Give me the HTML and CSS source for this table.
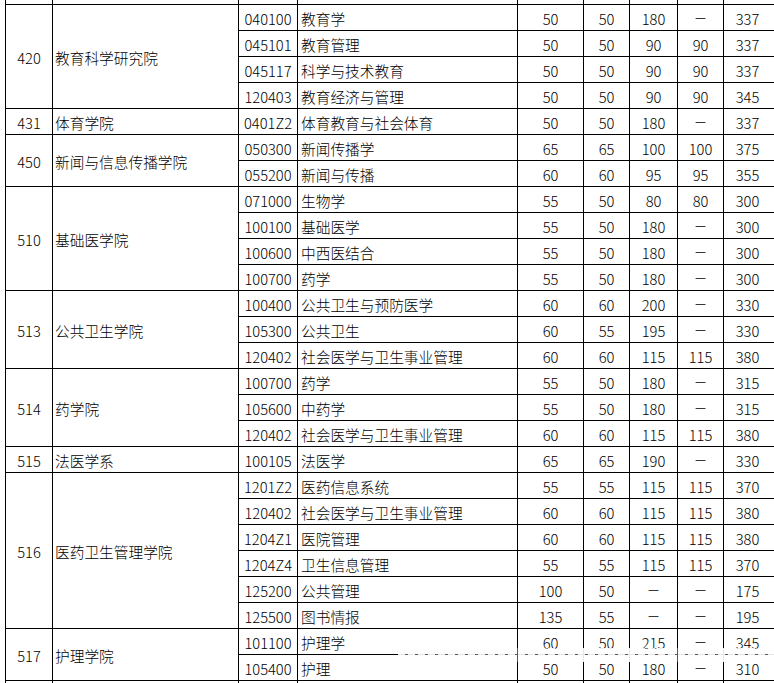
FILE: index.html
```html
<!DOCTYPE html>
<html lang="zh">
<head>
<meta charset="utf-8">
<title>录取分数线</title>
<link rel="stylesheet" href="styles.css">
</head>
<body>
<div class="sheet">
  <div class="grid">
    <div class="c stub"></div><div class="c stub"></div><div class="c stub"></div><div class="c stub"></div><div class="c stub"></div><div class="c stub"></div><div class="c stub"></div><div class="c stub"></div><div class="c stub last"></div>

    <div class="c span4">420</div><div class="c l span4">教育科学研究院</div>
    <div class="c">040100</div><div class="c m">教育学</div><div class="c">50</div><div class="c">50</div><div class="c">180</div><div class="c"><span class="dash">—</span></div><div class="c last">337</div>
    <div class="c">045101</div><div class="c m">教育管理</div><div class="c">50</div><div class="c">50</div><div class="c">90</div><div class="c">90</div><div class="c last">337</div>
    <div class="c">045117</div><div class="c m">科学与技术教育</div><div class="c">50</div><div class="c">50</div><div class="c">90</div><div class="c">90</div><div class="c last">337</div>
    <div class="c">120403</div><div class="c m">教育经济与管理</div><div class="c">50</div><div class="c">50</div><div class="c">90</div><div class="c">90</div><div class="c last">345</div>

    <div class="c">431</div><div class="c l">体育学院</div>
    <div class="c">0401Z2</div><div class="c m">体育教育与社会体育</div><div class="c">50</div><div class="c">50</div><div class="c">180</div><div class="c"><span class="dash">—</span></div><div class="c last">337</div>

    <div class="c span2">450</div><div class="c l span2">新闻与信息传播学院</div>
    <div class="c">050300</div><div class="c m">新闻传播学</div><div class="c">65</div><div class="c">65</div><div class="c">100</div><div class="c">100</div><div class="c last">375</div>
    <div class="c">055200</div><div class="c m">新闻与传播</div><div class="c">60</div><div class="c">60</div><div class="c">95</div><div class="c">95</div><div class="c last">355</div>

    <div class="c span4">510</div><div class="c l span4">基础医学院</div>
    <div class="c">071000</div><div class="c m">生物学</div><div class="c">55</div><div class="c">50</div><div class="c">80</div><div class="c">80</div><div class="c last">300</div>
    <div class="c">100100</div><div class="c m">基础医学</div><div class="c">55</div><div class="c">50</div><div class="c">180</div><div class="c"><span class="dash">—</span></div><div class="c last">300</div>
    <div class="c">100600</div><div class="c m">中西医结合</div><div class="c">55</div><div class="c">50</div><div class="c">180</div><div class="c"><span class="dash">—</span></div><div class="c last">300</div>
    <div class="c">100700</div><div class="c m">药学</div><div class="c">55</div><div class="c">50</div><div class="c">180</div><div class="c"><span class="dash">—</span></div><div class="c last">300</div>

    <div class="c span3">513</div><div class="c l span3">公共卫生学院</div>
    <div class="c">100400</div><div class="c m">公共卫生与预防医学</div><div class="c">60</div><div class="c">60</div><div class="c">200</div><div class="c"><span class="dash">—</span></div><div class="c last">330</div>
    <div class="c">105300</div><div class="c m">公共卫生</div><div class="c">60</div><div class="c">55</div><div class="c">195</div><div class="c"><span class="dash">—</span></div><div class="c last">330</div>
    <div class="c">120402</div><div class="c m">社会医学与卫生事业管理</div><div class="c">60</div><div class="c">60</div><div class="c">115</div><div class="c">115</div><div class="c last">380</div>

    <div class="c span3">514</div><div class="c l span3">药学院</div>
    <div class="c">100700</div><div class="c m">药学</div><div class="c">55</div><div class="c">50</div><div class="c">180</div><div class="c"><span class="dash">—</span></div><div class="c last">315</div>
    <div class="c">105600</div><div class="c m">中药学</div><div class="c">55</div><div class="c">50</div><div class="c">180</div><div class="c"><span class="dash">—</span></div><div class="c last">315</div>
    <div class="c">120402</div><div class="c m">社会医学与卫生事业管理</div><div class="c">60</div><div class="c">60</div><div class="c">115</div><div class="c">115</div><div class="c last">380</div>

    <div class="c">515</div><div class="c l">法医学系</div>
    <div class="c">100105</div><div class="c m">法医学</div><div class="c">65</div><div class="c">65</div><div class="c">190</div><div class="c"><span class="dash">—</span></div><div class="c last">330</div>

    <div class="c span6">516</div><div class="c l span6">医药卫生管理学院</div>
    <div class="c">1201Z2</div><div class="c m">医药信息系统</div><div class="c">55</div><div class="c">55</div><div class="c">115</div><div class="c">115</div><div class="c last">370</div>
    <div class="c">120402</div><div class="c m">社会医学与卫生事业管理</div><div class="c">60</div><div class="c">60</div><div class="c">115</div><div class="c">115</div><div class="c last">380</div>
    <div class="c">1204Z1</div><div class="c m">医院管理</div><div class="c">60</div><div class="c">60</div><div class="c">115</div><div class="c">115</div><div class="c last">380</div>
    <div class="c">1204Z4</div><div class="c m">卫生信息管理</div><div class="c">55</div><div class="c">55</div><div class="c">115</div><div class="c">115</div><div class="c last">370</div>
    <div class="c">125200</div><div class="c m">公共管理</div><div class="c">100</div><div class="c">50</div><div class="c"><span class="dash">—</span></div><div class="c"><span class="dash">—</span></div><div class="c last">175</div>
    <div class="c">125500</div><div class="c m">图书情报</div><div class="c">135</div><div class="c">55</div><div class="c"><span class="dash">—</span></div><div class="c"><span class="dash">—</span></div><div class="c last">195</div>

    <div class="c span2">517</div><div class="c l span2">护理学院</div>
    <div class="c">101100</div><div class="c m">护理学</div><div class="c">60</div><div class="c">50</div><div class="c">215</div><div class="c"><span class="dash">—</span></div><div class="c last">345</div>
    <div class="c">105400</div><div class="c m">护理</div><div class="c">50</div><div class="c">50</div><div class="c">180</div><div class="c"><span class="dash">—</span></div><div class="c last">310</div>

    <div class="c tail"></div><div class="c tail"></div><div class="c tail"></div><div class="c tail"></div><div class="c tail"></div><div class="c tail"></div><div class="c tail"></div><div class="c tail"></div><div class="c tail last"></div>
  </div>
  <div class="watermark"></div>
</div>
</body>
</html>
```

FILE: styles.css
```css
html, body {
  margin: 0;
  padding: 0;
  background: #fff;
  overflow: hidden;
}

.sheet {
  position: relative;
  width: 774px;
  height: 683px;
  overflow: hidden;
}

.grid {
  display: grid;
  grid-template-columns: 47px 186px 59px 220px 66px 46px 48px 46px 70px;
  grid-template-rows: 5px repeat(27, 26px);
  margin-left: 5px;
  border-left: 1px solid #000;
  width: max-content;
  font-family: "Noto Sans CJK SC", "Noto Sans", sans-serif;
  font-size: 14.7px;
  font-weight: 300;
  color: #000;
}

.c {
  box-sizing: border-box;
  border-right: 1px solid #000;
  border-bottom: 1px solid #000;
  display: flex;
  align-items: center;
  justify-content: center;
  padding-top: 3px;
  line-height: 20px;
  white-space: nowrap;
}

.c.l {
  justify-content: flex-start;
  padding-left: 2px;
}

.c.m {
  justify-content: flex-start;
  padding-left: 3px;
}

.c.last {
  padding-right: 22px;
}

.c.stub {
  padding: 0;
}

.c.tail {
  border-bottom: none;
}

.span2 { grid-row: span 2; }
.span3 { grid-row: span 3; }
.span4 { grid-row: span 4; }
.span6 { grid-row: span 6; }

.dash {
  font-family: "DejaVu Sans", sans-serif;
  font-size: 11px;
  font-weight: 400;
  position: relative;
  top: -1px;
}

.watermark {
  position: absolute;
  left: 398px;
  top: 648px;
  width: 376px;
  height: 14px;
  background:
    repeating-linear-gradient(90deg, rgba(255,255,255,0.9) 0 7px, rgba(255,255,255,0.35) 7px 10px);
}
```
